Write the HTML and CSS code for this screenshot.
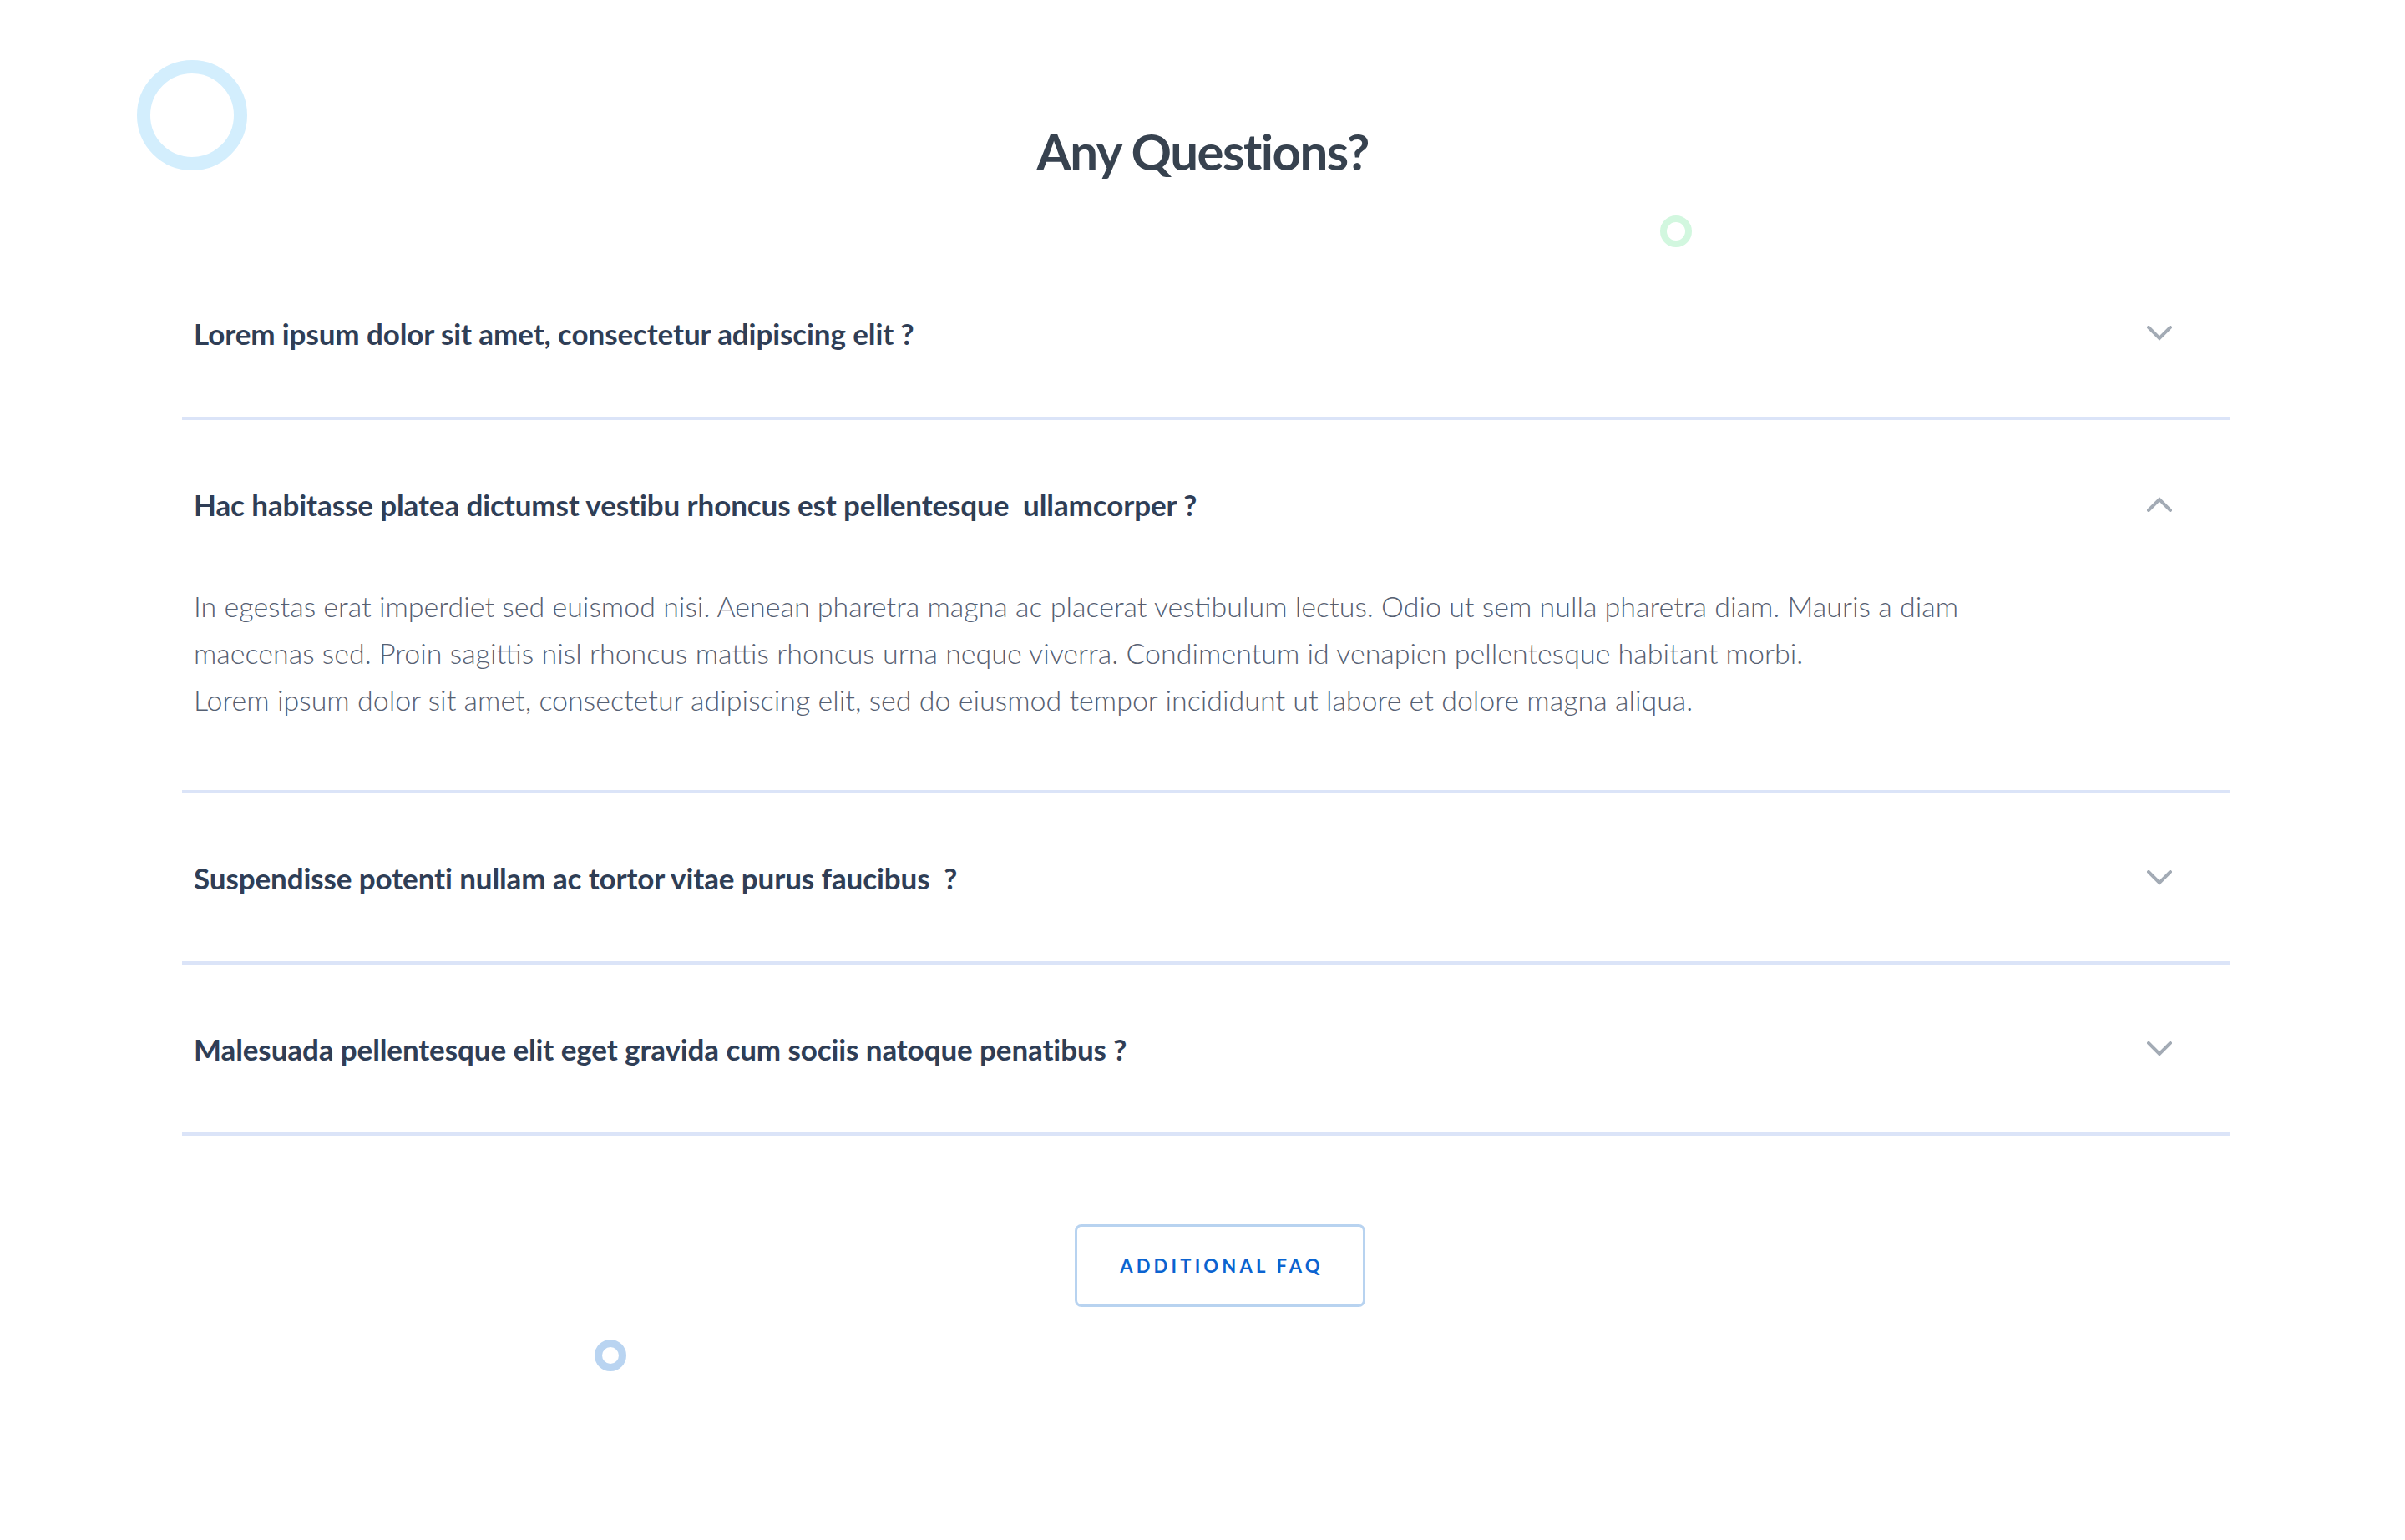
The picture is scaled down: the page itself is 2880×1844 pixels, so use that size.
FILE: index.html
```html
<!DOCTYPE html>
<html lang="en">
<head>
<meta charset="utf-8">
<title>Any Questions?</title>
<link rel="stylesheet" href="styles.css">
</head>
<body>
<section class="faq">
  <span class="ring ring-big"></span>
  <span class="ring ring-green"></span>
  <span class="ring ring-blue"></span>

  <h1 class="faq-title">Any Questions?</h1>

  <div class="faq-list">
    <div class="faq-item">
      <div class="faq-head">
        <span class="faq-q">Lorem ipsum dolor sit amet, consectetur adipiscing elit ?</span>
        <svg class="chev" viewBox="0 0 30 18" width="30" height="18"><polyline points="2,2 15,15 28,2"/></svg>
      </div>
    </div>
    <div class="faq-item open">
      <div class="faq-head">
        <span class="faq-q">Hac habitasse platea dictumst vestibu rhoncus est pellentesque&nbsp; ullamcorper ?</span>
        <svg class="chev" viewBox="0 0 30 18" width="30" height="18"><polyline points="2,16 15,3 28,16"/></svg>
      </div>
      <p class="faq-a">In egestas erat imperdiet sed euismod nisi. Aenean pharetra magna ac placerat vestibulum lectus. Odio ut sem nulla pharetra diam. Mauris a diam<br>maecenas sed. Proin sagittis nisl rhoncus mattis rhoncus urna neque viverra. Condimentum id venapien pellentesque habitant morbi.<br>Lorem ipsum dolor sit amet, consectetur adipiscing elit, sed do eiusmod tempor incididunt ut labore et dolore magna aliqua.</p>
    </div>
    <div class="faq-item">
      <div class="faq-head">
        <span class="faq-q">Suspendisse potenti nullam ac tortor vitae purus faucibus&nbsp; ?</span>
        <svg class="chev" viewBox="0 0 30 18" width="30" height="18"><polyline points="2,2 15,15 28,2"/></svg>
      </div>
    </div>
    <div class="faq-item">
      <div class="faq-head">
        <span class="faq-q">Malesuada pellentesque elit eget gravida cum sociis natoque penatibus ?</span>
        <svg class="chev" viewBox="0 0 30 18" width="30" height="18"><polyline points="2,2 15,15 28,2"/></svg>
      </div>
    </div>
  </div>

  <div class="faq-actions">
    <a class="faq-btn" href="#">ADDITIONAL FAQ</a>
  </div>
</section>
</body>
</html>
```
FILE: styles.css
```css
html, body {
  margin: 0;
  padding: 0;
  background: #ffffff;
}

body {
  font-family: "Lato", "Source Sans Pro", "Noto Sans", sans-serif;
  min-height: 1844px;
}

.faq {
  position: relative;
  padding-top: 145px;
  padding-bottom: 200px;
}

.ring {
  position: absolute;
  display: block;
  border-radius: 50%;
  box-sizing: border-box;
}

.ring-big {
  left: 164px;
  top: 72px;
  width: 132px;
  height: 132px;
  border: 16px solid #d3eefd;
}

.ring-green {
  left: 1988px;
  top: 258px;
  width: 38px;
  height: 38px;
  border: 8px solid #d2f7df;
}

.ring-blue {
  left: 712px;
  top: 1604px;
  width: 38px;
  height: 38px;
  border: 9px solid #b9d4f1;
}

.faq-title {
  margin: 0;
  text-align: center;
  font-size: 60px;
  line-height: 72px;
  font-weight: 700;
  color: #37424f;
  letter-spacing: -1.5px;
}

.faq-list {
  margin: 81px 210px 0 218px;
}

.faq-item {
  border-bottom: 4px solid #dbe4f8;
}

.faq-head {
  height: 201px;
  display: flex;
  align-items: center;
  justify-content: space-between;
  padding: 0 69px 0 14px;
}

.faq-q {
  font-size: 35px;
  font-weight: 700;
  color: #2f3e56;
  letter-spacing: -0.1px;
}

.chev {
  display: block;
  width: 30px;
  height: 18px;
}

.chev polyline {
  fill: none;
  stroke: #a3abb5;
  stroke-width: 4;
  stroke-linecap: square;
  stroke-linejoin: miter;
}

.faq-a {
  margin: -6px 0 0;
  padding: 0 14px 80px;
  font-size: 34px;
  line-height: 56px;
  font-weight: 300;
  color: #566072;
}

.faq-actions {
  display: flex;
  justify-content: center;
  padding-top: 106px;
  padding-left: 42px;
}

.faq-btn {
  display: flex;
  align-items: center;
  justify-content: center;
  box-sizing: border-box;
  width: 348px;
  height: 99px;
  border: 3px solid #b8d3f0;
  border-radius: 8px;
  font-size: 22px;
  font-weight: 700;
  letter-spacing: 4.2px;
  color: #0b63d0;
  text-decoration: none;
  padding-left: 4px;
}
```
